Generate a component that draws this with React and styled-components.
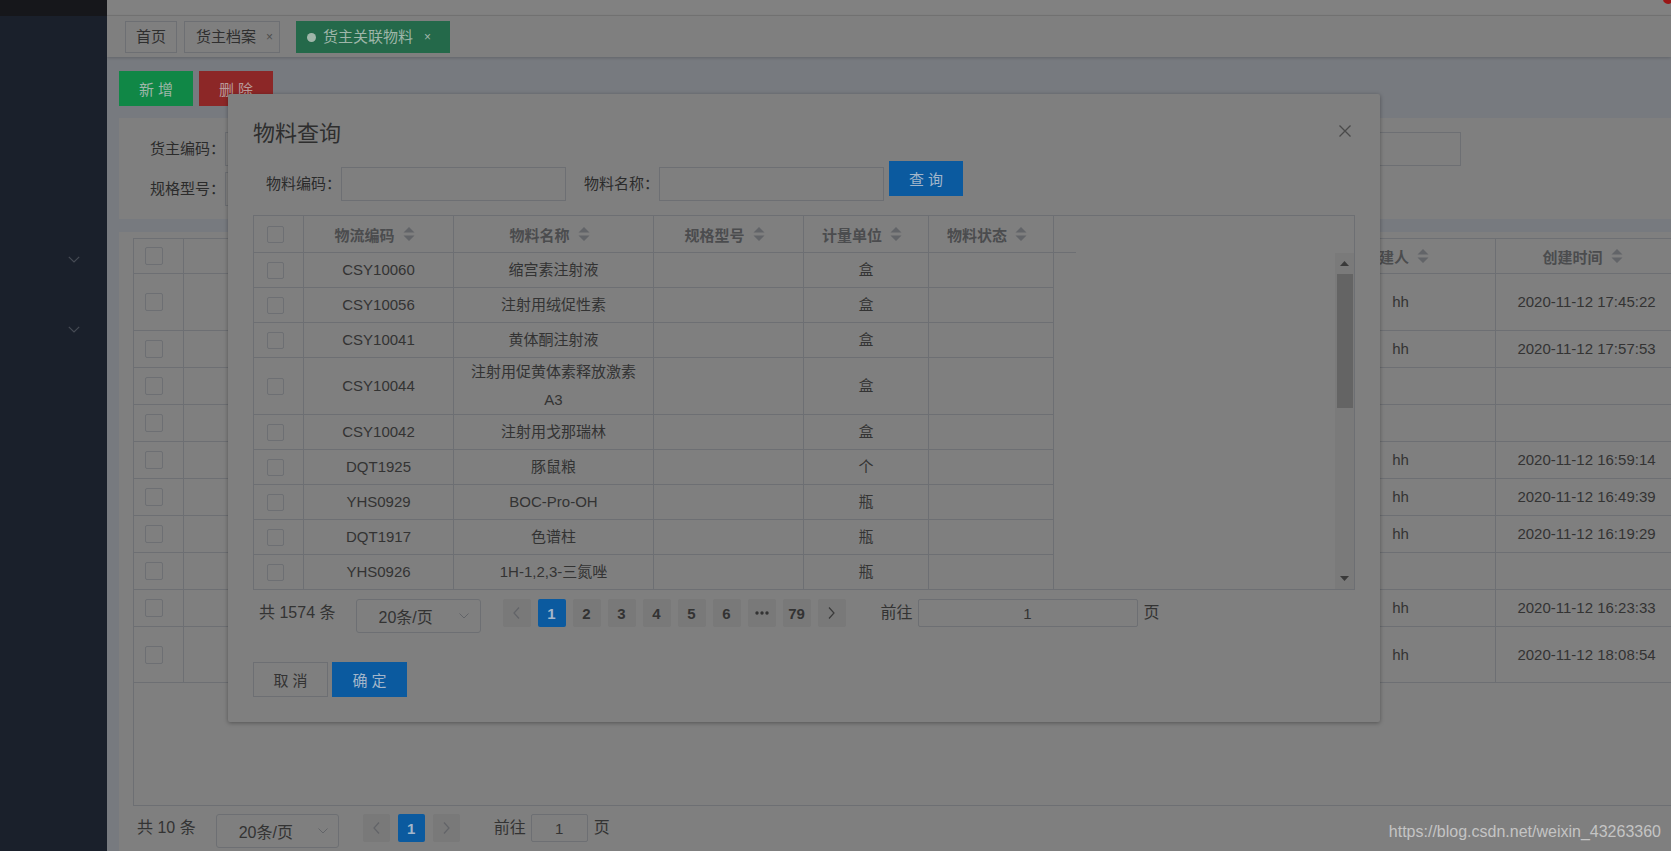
import React from 'react';
import styled, { createGlobalStyle } from 'styled-components';

const FONT = `"Liberation Sans", "Noto Sans CJK SC", sans-serif`;

const c = {
  side: '#1a202b',
  sideTop: '#16171b',
  chevron: '#464b54',
  page: '#777a7f',
  surface: '#7f7f7f',
  top: '#818181',
  line: '#6d6f73',
  text: '#333333',
  strong: '#2b2b2b',
  head: '#4b4c4e',
  muted: '#626468',
  blue: '#0b5a9f',
  blueText: '#a3b6ca',
  green: '#108746',
  greenTab: '#24694a',
  greenText: '#9fb6a9',
  red: '#8c2727',
  redText: '#b89a9a',
  pagerBg: '#797979',
  thumb: '#646464',
  track: '#7a7a7a',
};

const GlobalStyle = createGlobalStyle`
  * { box-sizing: border-box; }
  html, body { margin: 0; padding: 0; }
  body {
    width: 1671px;
    height: 851px;
    overflow: hidden;
    background: ${c.surface};
    font-family: ${FONT};
    color: ${c.text};
  }
  input { font-family: ${FONT}; }
`;

/* ---------- shell ---------- */
const Shell = styled.div`
  position: relative;
  display: flex;
  width: 1671px;
  height: 851px;
  overflow: hidden;
`;

const Sidebar = styled.aside`
  width: 107px;
  flex: none;
  background: ${c.side};
  display: flex;
  flex-direction: column;
`;
const SideTop = styled.div`
  height: 16px;
  background: ${c.sideTop};
`;
const SideMenu = styled.nav`
  padding-top: 208px;
  display: flex;
  flex-direction: column;
`;
const SideItem = styled.div`
  height: 70px;
  display: flex;
  align-items: center;
  justify-content: flex-end;
  padding-right: 27px;
`;

const Main = styled.main`
  flex: 1;
  min-width: 0;
  display: flex;
  flex-direction: column;
  background: ${c.page};
  overflow: hidden;
`;
const TopBar = styled.header`
  position: relative;
  height: 16px;
  flex: none;
  background: ${c.top};
  border-bottom: 1px solid #757575;
`;
const Badge = styled.span`
  position: absolute;
  right: -2px;
  top: -6px;
  width: 10px;
  height: 10px;
  border-radius: 50%;
  background: #9a1616;
`;

const TagsBar = styled.div`
  position: relative;
  z-index: 1;
  height: 41px;
  flex: none;
  display: flex;
  align-items: flex-start;
  padding: 5px 0 0 18px;
  background: ${c.surface};
  box-shadow: 0 1px 3px rgba(0, 0, 0, 0.18);
`;
const Tag = styled.div`
  height: 32px;
  display: flex;
  align-items: center;
  margin-left: ${(p) => p.$ml || 0}px;
  padding: ${(p) => p.$pad};
  border: 1px solid ${(p) => (p.$active ? c.greenTab : c.line)};
  background: ${(p) => (p.$active ? c.greenTab : c.surface)};
  color: ${(p) => (p.$active ? c.greenText : '#2f2f2f')};
  font-size: 15px;
  line-height: 20px;
  white-space: nowrap;
`;
const TagDot = styled.span`
  width: 9px;
  height: 9px;
  border-radius: 50%;
  background: ${c.greenText};
  margin-right: 7px;
`;
const TagClose = styled.span`
  margin-left: ${(p) => p.$ml}px;
  font-size: 12px;
  color: ${(p) => (p.$light ? c.greenText : '#4d4d4d')};
`;

const Content = styled.section`
  flex: 1;
  min-height: 0;
  display: flex;
  flex-direction: column;
  padding: 14px 0 0 12px;
`;
const ActionBar = styled.div`
  display: flex;
  gap: 6px;
`;
const ActionBtn = styled.button`
  width: 74px;
  height: 35px;
  border: none;
  padding: 0;
  background: ${(p) => p.$bg};
  color: ${(p) => p.$fg};
  font-family: ${FONT};
  font-size: 15px;
`;

const SearchPanel = styled.div`
  margin-top: 12px;
  background: ${c.surface};
  padding: 14px 0 13px;
  display: flex;
  flex-direction: column;
  gap: 6px;
`;
const SearchRow = styled.div`
  display: flex;
  gap: 20px;
`;
const FormItem = styled.div`
  display: flex;
  align-items: center;
`;
const FormLabel = styled.label`
  width: ${(p) => p.$w}px;
  text-align: right;
  font-size: 15px;
  line-height: 34px;
  color: ${c.strong};
  white-space: nowrap;
`;
const TextBox = styled.input`
  width: ${(p) => p.$w}px;
  height: ${(p) => p.$h || 34}px;
  margin: 0;
  padding: 0;
  border: 1px solid ${c.line};
  border-radius: ${(p) => p.$r || 0}px;
  background: ${c.surface};
  color: ${c.text};
  font-size: 15px;
  text-align: center;
  outline: none;
`;

const TablePanel = styled.div`
  margin-top: 13px;
  flex: 1;
  min-height: 0;
  background: ${c.surface};
  padding: 6px 0 0 14px;
  overflow: hidden;
  display: flex;
  flex-direction: column;
`;
const BgTable = styled.div`
  width: 1544px;
  height: 568px;
  flex: none;
  border: 1px solid ${c.line};
  display: flex;
  flex-direction: column;
`;
const BgRow = styled.div`
  display: flex;
  height: ${(p) => p.$h}px;
  flex: none;
  border-bottom: 1px solid ${c.line};
`;
const HeadCell = styled.div`
  width: ${(p) => p.$w}px;
  flex: none;
  display: flex;
  align-items: center;
  justify-content: ${(p) => (p.$check ? 'flex-start' : 'center')};
  gap: 8px;
  padding: ${(p) => (p.$check ? `0 0 0 ${p.$pl}px` : p.$bare ? '0' : '0 8px 0 0')};
  border-right: ${(p) => (p.$bare ? 'none' : `1px solid ${c.line}`)};
  font-size: 15px;
  font-weight: bold;
  color: ${c.head};
  white-space: nowrap;
`;
const BodyCell = styled.div`
  width: ${(p) => p.$w}px;
  flex: none;
  display: flex;
  align-items: center;
  justify-content: ${(p) => (p.$check ? 'flex-start' : 'center')};
  padding: ${(p) => (p.$check ? `0 0 0 ${p.$pl}px` : '0 14px')};
  border-right: 1px solid ${c.line};
  font-size: 15px;
  line-height: 28px;
  color: ${c.text};
  text-align: center;
`;
const CheckBox = styled.span`
  display: block;
  width: ${(p) => p.$s}px;
  height: ${(p) => p.$s}px;
  border: 1px solid ${c.line};
  border-radius: 2px;
  background: ${c.surface};
`;

/* ---------- pagination ---------- */
const Pager = styled.div`
  display: flex;
  align-items: flex-start;
  margin-top: ${(p) => p.$mt}px;
  padding-left: ${(p) => p.$pl}px;
`;
const PagerText = styled.span`
  margin-left: ${(p) => p.$ml || 0}px;
  font-size: 16px;
  line-height: 28px;
  color: ${c.text};
  white-space: nowrap;
`;
const PageSelect = styled.div`
  width: ${(p) => p.$w}px;
  height: 34px;
  margin-left: ${(p) => p.$ml}px;
  display: flex;
  align-items: center;
  padding: 0 ${(p) => p.$pr}px 0 22px;
  border: 1px solid ${c.line};
  border-radius: 3px;
  font-size: 16px;
  color: ${c.text};
  & > svg { margin-left: auto; }
`;
const PagerBtn = styled.div`
  width: ${(p) => p.$w}px;
  height: 28px;
  margin-left: ${(p) => p.$ml}px;
  display: flex;
  align-items: center;
  justify-content: center;
  border-radius: 2px;
  background: ${(p) => (p.$active ? c.blue : c.pagerBg)};
  color: ${(p) => (p.$active ? c.blueText : c.text)};
  font-size: 15px;
  font-weight: bold;
`;
const JumpBox = styled(TextBox)`
  margin-left: 5px;
`;

/* ---------- dialog ---------- */
const Dialog = styled.div`
  position: absolute;
  left: 228px;
  top: 94px;
  width: 1152px;
  padding: 25px 25px 25px;
  background: ${c.surface};
  border-radius: 2px;
  box-shadow: 0 1px 4px rgba(0, 0, 0, 0.35);
`;
const DialogTitle = styled.h2`
  margin: 0;
  font-size: 22px;
  font-weight: normal;
  line-height: 30px;
  color: #2e2e2e;
`;
const CloseBtn = styled.span`
  position: absolute;
  top: 31px;
  right: 29px;
  width: 12px;
  height: 12px;
  display: flex;
`;
const QueryRow = styled.div`
  display: flex;
  align-items: flex-start;
  margin-top: 12px;
  & > input { margin-top: 6px; }
`;
const QueryLabel = styled.span`
  margin-top: 6px;
  padding-left: ${(p) => p.$pl}px;
  font-size: 15px;
  line-height: 34px;
  color: ${c.strong};
  white-space: nowrap;
`;
const SolidBtn = styled.button`
  width: ${(p) => p.$w}px;
  height: 35px;
  margin: 0 0 0 ${(p) => p.$ml || 0}px;
  padding: 0;
  border: 1px solid ${(p) => (p.$primary ? c.blue : c.line)};
  background: ${(p) => (p.$primary ? c.blue : c.surface)};
  color: ${(p) => (p.$primary ? c.blueText : c.text)};
  font-family: ${FONT};
  font-size: 15px;
`;
const DlgTable = styled.div`
  margin-top: 14px;
  height: 375px;
  border: 1px solid ${c.line};
  display: flex;
  flex-direction: column;
`;
const DlgHead = styled.div`
  height: 37px;
  flex: none;
  display: flex;
`;
const DlgHeadRow = styled.div`
  display: flex;
  height: 37px;
  border-bottom: 1px solid ${c.line};
`;
const DlgBody = styled.div`
  height: 336px;
  flex: none;
  display: flex;
  overflow: hidden;
`;
const DlgRows = styled.div`
  width: 800px;
  flex: none;
`;
const DlgRow = styled.div`
  display: flex;
  min-height: 35px;
  border-bottom: 1px solid ${c.line};
`;
const Spacer = styled.div`
  flex: 1;
`;
const ScrollBar = styled.div`
  width: 19px;
  flex: none;
  display: flex;
  flex-direction: column;
  align-items: center;
  background: ${c.track};
`;
const ScrollArrow = styled.div`
  height: 21px;
  width: 100%;
  flex: none;
  display: flex;
  align-items: center;
  justify-content: center;
  margin-top: ${(p) => (p.$bottom ? 'auto' : '0')};
`;
const ScrollThumb = styled.div`
  width: 16px;
  height: 134px;
  background: ${c.thumb};
`;
const DlgFooter = styled.div`
  display: flex;
  gap: 4px;
  margin-top: 29px;
`;

const Watermark = styled.div`
  position: absolute;
  right: 10px;
  bottom: 10px;
  font-family: "Liberation Sans", sans-serif;
  font-size: 16px;
  line-height: 18px;
  color: #c4c4c4;
`;

/* ---------- icons ---------- */
const Chevron = () => (
  <svg width="12" height="7" viewBox="0 0 12 7">
    <polyline points="0.8,0.8 6,6 11.2,0.8" fill="none" stroke={c.chevron} strokeWidth="1.2" />
  </svg>
);
const SortCaret = () => (
  <svg width="12" height="16" viewBox="0 0 12 16">
    <path d="M0.5 6.5 L6 1 L11.5 6.5 Z M0.5 9.5 L11.5 9.5 L6 15 Z" fill={c.muted} />
  </svg>
);
const SelectArrow = () => (
  <svg width="10" height="6" viewBox="0 0 10 6">
    <polyline points="0.5,0.5 5,5 9.5,0.5" fill="none" stroke={c.muted} strokeWidth="1" />
  </svg>
);
const PageArrow = ({ dir, color }) => (
  <svg width="7" height="12" viewBox="0 0 7 12">
    <polyline
      points={dir === 'left' ? '6,0.5 1,6 6,11.5' : '1,0.5 6,6 1,11.5'}
      fill="none"
      stroke={color}
      strokeWidth="1.2"
    />
  </svg>
);
const MoreDots = () => (
  <svg width="14" height="4" viewBox="0 0 14 4">
    <circle cx="2" cy="2" r="1.7" fill={c.text} />
    <circle cx="7" cy="2" r="1.7" fill={c.text} />
    <circle cx="12" cy="2" r="1.7" fill={c.text} />
  </svg>
);
const Tri = ({ up }) => (
  <svg width="9" height="5" viewBox="0 0 9 5">
    <path d={up ? 'M0 5 L4.5 0 L9 5 Z' : 'M0 0 L9 0 L4.5 5 Z'} fill="#3a3a3a" />
  </svg>
);
const CloseIcon = () => (
  <svg width="12" height="12" viewBox="0 0 12 12">
    <path d="M0.5 0.5 L11.5 11.5 M11.5 0.5 L0.5 11.5" stroke="#4a4a4a" strokeWidth="1.3" />
  </svg>
);

/* ---------- data ---------- */
const materials = [
  { code: 'CSY10060', name: '缩宫素注射液', unit: '盒' },
  { code: 'CSY10056', name: '注射用绒促性素', unit: '盒' },
  { code: 'CSY10041', name: '黄体酮注射液', unit: '盒' },
  { code: 'CSY10044', name: '注射用促黄体素释放激素A3', unit: '盒' },
  { code: 'CSY10042', name: '注射用戈那瑞林', unit: '盒' },
  { code: 'DQT1925', name: '豚鼠粮', unit: '个' },
  { code: 'YHS0929', name: 'BOC-Pro-OH', unit: '瓶' },
  { code: 'DQT1917', name: '色谱柱', unit: '瓶' },
  { code: 'YHS0926', name: '1H-1,2,3-三氮唑', unit: '瓶' },
];

const dlgCols = [
  { w: 50 },
  { w: 150, title: '物流编码' },
  { w: 200, title: '物料名称' },
  { w: 150, title: '规格型号' },
  { w: 125, title: '计量单位' },
  { w: 125, title: '物料状态' },
];

const ownerRows = [
  { h: 57, user: 'hh', time: '2020-11-12 17:45:22' },
  { h: 37, user: 'hh', time: '2020-11-12 17:57:53' },
  { h: 37 },
  { h: 37 },
  { h: 37, user: 'hh', time: '2020-11-12 16:59:14' },
  { h: 37, user: 'hh', time: '2020-11-12 16:49:39' },
  { h: 37, user: 'hh', time: '2020-11-12 16:19:29' },
  { h: 37 },
  { h: 37, user: 'hh', time: '2020-11-12 16:23:33' },
  { h: 56, user: 'hh', time: '2020-11-12 18:08:54' },
];
const hiddenCols = [187, 187, 187, 187, 187, 187];

export default function App() {
  return (
    <>
      <GlobalStyle />
      <Shell>
        <Sidebar>
          <SideTop />
          <SideMenu>
            <SideItem><Chevron /></SideItem>
            <SideItem><Chevron /></SideItem>
          </SideMenu>
        </Sidebar>

        <Main>
          <TopBar><Badge /></TopBar>
          <TagsBar>
            <Tag $pad="0 10px">首页</Tag>
            <Tag $ml={7} $pad="0 6px 0 11px">
              货主档案<TagClose $ml={10}>×</TagClose>
            </Tag>
            <Tag $ml={16} $active $pad="0 18px 0 10px">
              <TagDot />货主关联物料<TagClose $ml={11} $light>×</TagClose>
            </Tag>
          </TagsBar>

          <Content>
            <ActionBar>
              <ActionBtn $bg={c.green} $fg={c.greenText}>新 增</ActionBtn>
              <ActionBtn $bg={c.red} $fg={c.redText}>删 除</ActionBtn>
            </ActionBar>

            <SearchPanel>
              <SearchRow>
                <FormItem><FormLabel $w={106}>货主编码：</FormLabel><TextBox $w={328} readOnly /></FormItem>
                <FormItem><FormLabel $w={106}>货主名称：</FormLabel><TextBox $w={328} readOnly /></FormItem>
                <FormItem><FormLabel $w={106}>物料编码：</FormLabel><TextBox $w={328} readOnly /></FormItem>
              </SearchRow>
              <SearchRow>
                <FormItem><FormLabel $w={106}>规格型号：</FormLabel><TextBox $w={328} readOnly /></FormItem>
              </SearchRow>
            </SearchPanel>

            <TablePanel>
              <BgTable>
                <BgRow $h={35}>
                  <HeadCell $w={50} $check $pl={11}><CheckBox $s={18} /></HeadCell>
                  {hiddenCols.map((w, i) => <HeadCell key={i} $w={w} />)}
                  <HeadCell $w={190}>创建人<SortCaret /></HeadCell>
                  <HeadCell $w={182}>创建时间<SortCaret /></HeadCell>
                </BgRow>
                {ownerRows.map((r, i) => (
                  <BgRow key={i} $h={r.h}>
                    <BodyCell $w={50} $check $pl={11}><CheckBox $s={18} /></BodyCell>
                    {hiddenCols.map((w, j) => <BodyCell key={j} $w={w} />)}
                    <BodyCell $w={190}>{r.user}</BodyCell>
                    <BodyCell $w={182}>{r.time}</BodyCell>
                  </BgRow>
                ))}
              </BgTable>

              <Pager $mt={8} $pl={4}>
                <PagerText>共 10 条</PagerText>
                <PageSelect $w={123} $ml={20} $pr={10}>20条/页<SelectArrow /></PageSelect>
                <PagerBtn $w={27} $ml={24}><PageArrow dir="left" color={c.muted} /></PagerBtn>
                <PagerBtn $w={27} $ml={8} $active>1</PagerBtn>
                <PagerBtn $w={27} $ml={8}><PageArrow dir="right" color={c.muted} /></PagerBtn>
                <PagerText $ml={34}>前往</PagerText>
                <JumpBox $w={57} $h={28} $r={2} value="1" readOnly />
                <PagerText $ml={6}>页</PagerText>
              </Pager>
            </TablePanel>
          </Content>
        </Main>

        <Dialog role="dialog">
          <DialogTitle>物料查询</DialogTitle>
          <CloseBtn><CloseIcon /></CloseBtn>

          <QueryRow>
            <QueryLabel $pl={13}>物料编码：</QueryLabel>
            <TextBox $w={225} readOnly />
            <QueryLabel $pl={18}>物料名称：</QueryLabel>
            <TextBox $w={225} readOnly />
            <SolidBtn $primary $w={74} $ml={5}>查 询</SolidBtn>
          </QueryRow>

          <DlgTable>
            <DlgHead>
              <DlgHeadRow>
                {dlgCols.map((col, i) =>
                  col.title ? (
                    <HeadCell key={i} $w={col.w}>{col.title}<SortCaret /></HeadCell>
                  ) : (
                    <HeadCell key={i} $w={col.w} $check $pl={13}><CheckBox $s={17} /></HeadCell>
                  )
                )}
                <HeadCell $w={22} $bare />
              </DlgHeadRow>
            </DlgHead>
            <DlgBody>
              <DlgRows>
                {materials.map((m) => (
                  <DlgRow key={m.code}>
                    <BodyCell $w={50} $check $pl={13}><CheckBox $s={17} /></BodyCell>
                    <BodyCell $w={150}>{m.code}</BodyCell>
                    <BodyCell $w={200}>{m.name}</BodyCell>
                    <BodyCell $w={150}></BodyCell>
                    <BodyCell $w={125}>{m.unit}</BodyCell>
                    <BodyCell $w={125}></BodyCell>
                  </DlgRow>
                ))}
              </DlgRows>
              <Spacer />
              <ScrollBar>
                <ScrollArrow><Tri up /></ScrollArrow>
                <ScrollThumb />
                <ScrollArrow $bottom><Tri /></ScrollArrow>
              </ScrollBar>
            </DlgBody>
          </DlgTable>

          <Pager $mt={9} $pl={6}>
            <PagerText>共 1574 条</PagerText>
            <PageSelect $w={125} $ml={20} $pr={11}>20条/页<SelectArrow /></PageSelect>
            <PagerBtn $w={28} $ml={22}><PageArrow dir="left" color={c.muted} /></PagerBtn>
            <PagerBtn $w={28} $ml={7} $active>1</PagerBtn>
            {['2', '3', '4', '5', '6'].map((n) => (
              <PagerBtn key={n} $w={28} $ml={7}>{n}</PagerBtn>
            ))}
            <PagerBtn $w={28} $ml={7}><MoreDots /></PagerBtn>
            <PagerBtn $w={28} $ml={7}>79</PagerBtn>
            <PagerBtn $w={28} $ml={7}><PageArrow dir="right" color="#3a3a3a" /></PagerBtn>
            <PagerText $ml={35}>前往</PagerText>
            <JumpBox $w={220} $h={28} $r={2} value="1" readOnly />
            <PagerText $ml={6}>页</PagerText>
          </Pager>

          <DlgFooter>
            <SolidBtn $w={75}>取 消</SolidBtn>
            <SolidBtn $w={75} $primary>确 定</SolidBtn>
          </DlgFooter>
        </Dialog>

        <Watermark>https://blog.csdn.net/weixin_43263360</Watermark>
      </Shell>
    </>
  );
}
